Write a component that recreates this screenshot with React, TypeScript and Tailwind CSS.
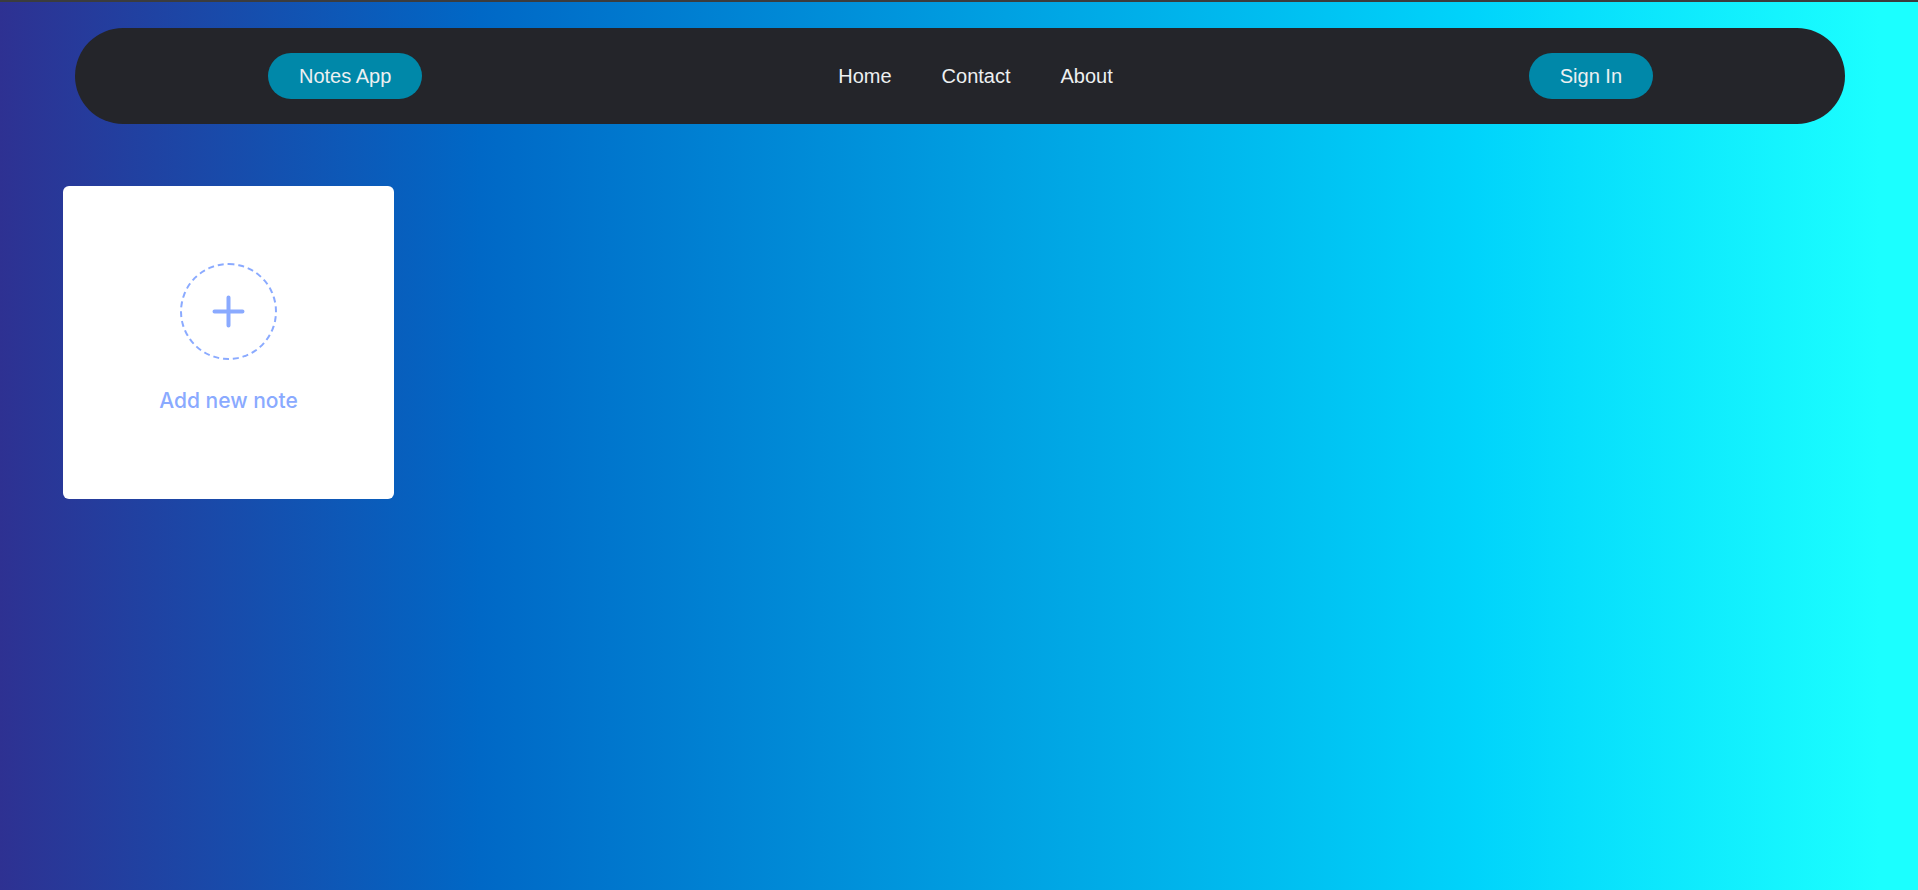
export default function App() {
    const links = ['Home', 'Contact', 'About'];

    return (
        <div className="min-h-screen w-full bg-[linear-gradient(90deg,#2e3192_0%,#0068c6_25%,#00d4fb_77%,#1bffff_98%)] font-['Liberation_Sans',Arial,sans-serif]">
            <div className="h-[2px] bg-[#3b3c3e]" />

            <header className="pt-[26px]">
                <div className="ml-[75px] flex h-[96px] w-[1770px] items-center justify-between rounded-full bg-[#24252a] pl-[193px] pr-[192px]">
                    <button className="flex h-[46px] items-center justify-center rounded-full bg-[#0088a9] px-[31px] text-[20px] text-[#edf0f1]">
                        Notes App
                    </button>

                    <nav className="flex items-center gap-[50px]">
                        {links.map((link) => (
                            <a key={link} href="#" className="text-[20px] text-[#edf0f1]">
                                {link}
                            </a>
                        ))}
                    </nav>

                    <button className="flex h-[46px] items-center justify-center rounded-full bg-[#0088a9] px-[31px] text-[20px] text-[#edf0f1]">
                        Sign In
                    </button>
                </div>
            </header>

            <main className="pl-[63px] pt-[62px]">
                <div className="flex h-[313px] w-[331px] flex-col items-center rounded-md bg-white pt-[77px]">
                    <div className="flex h-[97px] w-[97px] items-center justify-center rounded-full border-2 border-dashed border-[#8aaaff]">
                        <svg width="33" height="33" viewBox="0 0 33 33" fill="none">
                            <path d="M16.5 2.5v28M2.5 16.5h28" stroke="#8aaaff" strokeWidth="4" strokeLinecap="round" />
                        </svg>
                    </div>
                    <p className="mt-[27px] font-['Inter',sans-serif] text-[21px] font-medium leading-[28px] text-[#8aaaff]">
                        Add new note
                    </p>
                </div>
            </main>
        </div>
    );
}
